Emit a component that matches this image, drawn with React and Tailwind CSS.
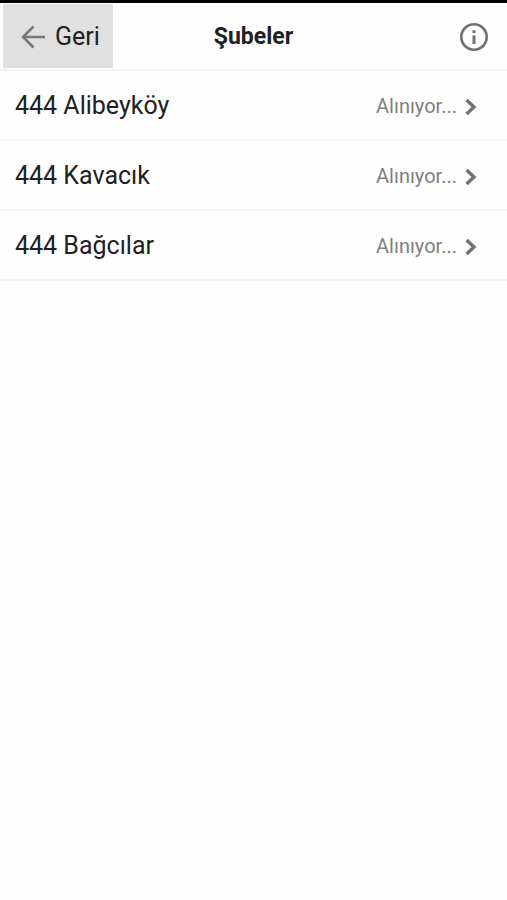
const branches = [
  { name: "444 Alibeyköy", status: "Alınıyor..." },
  { name: "444 Kavacık", status: "Alınıyor..." },
  { name: "444 Bağcılar", status: "Alınıyor..." },
];

function BackIcon() {
  return (
    <svg className="size-6 shrink-0" viewBox="0 0 24 24" fill="none" stroke="#787878" strokeWidth="2.6" aria-hidden="true">
      <path d="M12.5 1.5 2 12l10.5 10.5M2 12h22" />
    </svg>
  );
}

function InfoIcon() {
  return (
    <svg className="size-7" viewBox="0 0 28 28" fill="none" stroke="#707070" strokeWidth="2.6" aria-hidden="true">
      <circle cx="14" cy="14" r="12.7" />
      <path d="M14 12.6v8.4M14 7.2v2.8" strokeWidth="3" />
    </svg>
  );
}

function ChevronIcon() {
  return (
    <svg className="mt-0.5 h-4 w-3 shrink-0" viewBox="0 0 12 16" fill="none" stroke="#707070" strokeWidth="3.4" aria-hidden="true">
      <path d="M1.6 1 9 8l-7.4 7" />
    </svg>
  );
}

export default function App() {
  return (
    <div className="min-h-screen bg-[#fefefe] font-[Roboto,sans-serif] text-[#212121]">
      <div className="h-[3px] bg-black" />
      <header className="grid h-[68px] grid-cols-[1fr_auto_1fr] items-center border-b-2 border-[#f3f3f3] px-[3px]">
        <button type="button" className="flex h-16 w-[110px] items-center gap-2.5 justify-self-start rounded-xs bg-[#e0e0e0] pt-0.5 pl-[18px] text-[25px] leading-8">
          <BackIcon />
          Geri
        </button>
        <h1 className="pt-0.5 text-[23px] leading-8 font-bold">Şubeler</h1>
        <button type="button" aria-label="Bilgi" className="mr-4 justify-self-end pt-0.5">
          <InfoIcon />
        </button>
      </header>
      <ul>
        {branches.map((branch) => (
          <li key={branch.name} className="border-b-2 border-[#f3f3f3]">
            <button type="button" className="flex h-[68px] w-full items-center pt-0.5 pr-[30px] pl-[15px] text-left">
              <span className="flex-1 text-[25px] leading-8">{branch.name}</span>
              <span className="mr-2 text-[20px] leading-6 text-[#808080]">{branch.status}</span>
              <ChevronIcon />
            </button>
          </li>
        ))}
      </ul>
    </div>
  );
}
